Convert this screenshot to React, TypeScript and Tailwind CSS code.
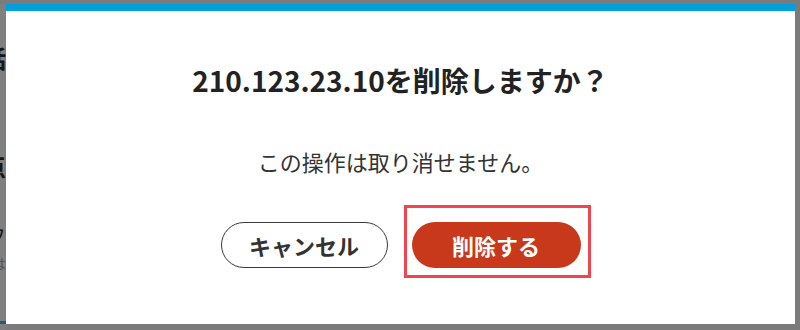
export default function App() {
  return (
    <div
      className="flex h-[330px] w-[800px] overflow-hidden bg-[#7b7b7b] pt-[4px]"
      style={{ fontFamily: '"Noto Sans CJK JP", "Noto Sans", sans-serif' }}
    >
      {/* page behind the overlay, only a sliver shows */}
      <div className="relative flex h-full w-[6px] flex-col overflow-hidden bg-[#7f7f7f]">
        <div className="absolute right-0 top-[34px] flex w-[60px] flex-col items-end text-[#161616]">
          <span className="text-[24px] font-bold leading-[40px]">話</span>
          <span className="mt-[68px] text-[24px] font-bold leading-[40px]">点</span>
          <span className="mt-[34px] text-[20px] leading-[32px]">フ</span>
          <span className="text-[14px] leading-[22px] text-[#555]">は</span>
        </div>
        <div className="absolute bottom-[6px] left-0 h-[3px] w-full bg-[#1f5c78]" />
      </div>

      <div className="flex h-[320px] w-[789px] flex-col items-center bg-white">
        <div className="h-[7px] w-full bg-[#00a0dc]" />
        <h2 className="mt-[48px] text-[28px] font-bold leading-[42px] text-[#222]">
          210.123.23.10を削除しますか？
        </h2>
        <p className="mt-[44px] text-[22px] leading-[33px] text-[#333]">この操作は取り消せません。</p>
        <div className="mt-[44px] flex gap-[24px]">
          <button className="h-[46px] w-[167px] rounded-full border-[1.5px] border-[#3a3a3a] bg-white text-[22px] font-bold text-[#333]">
            キャンセル
          </button>
          <div className="relative">
            <button className="h-[46px] w-[169px] rounded-full bg-[#c8381a] text-[22px] font-bold text-white">
              削除する
            </button>
            <span className="pointer-events-none absolute -bottom-[10px] -left-[8px] -right-[10px] -top-[17px] border-[3px] border-[#f0444f]" />
          </div>
        </div>
      </div>
    </div>
  );
}
